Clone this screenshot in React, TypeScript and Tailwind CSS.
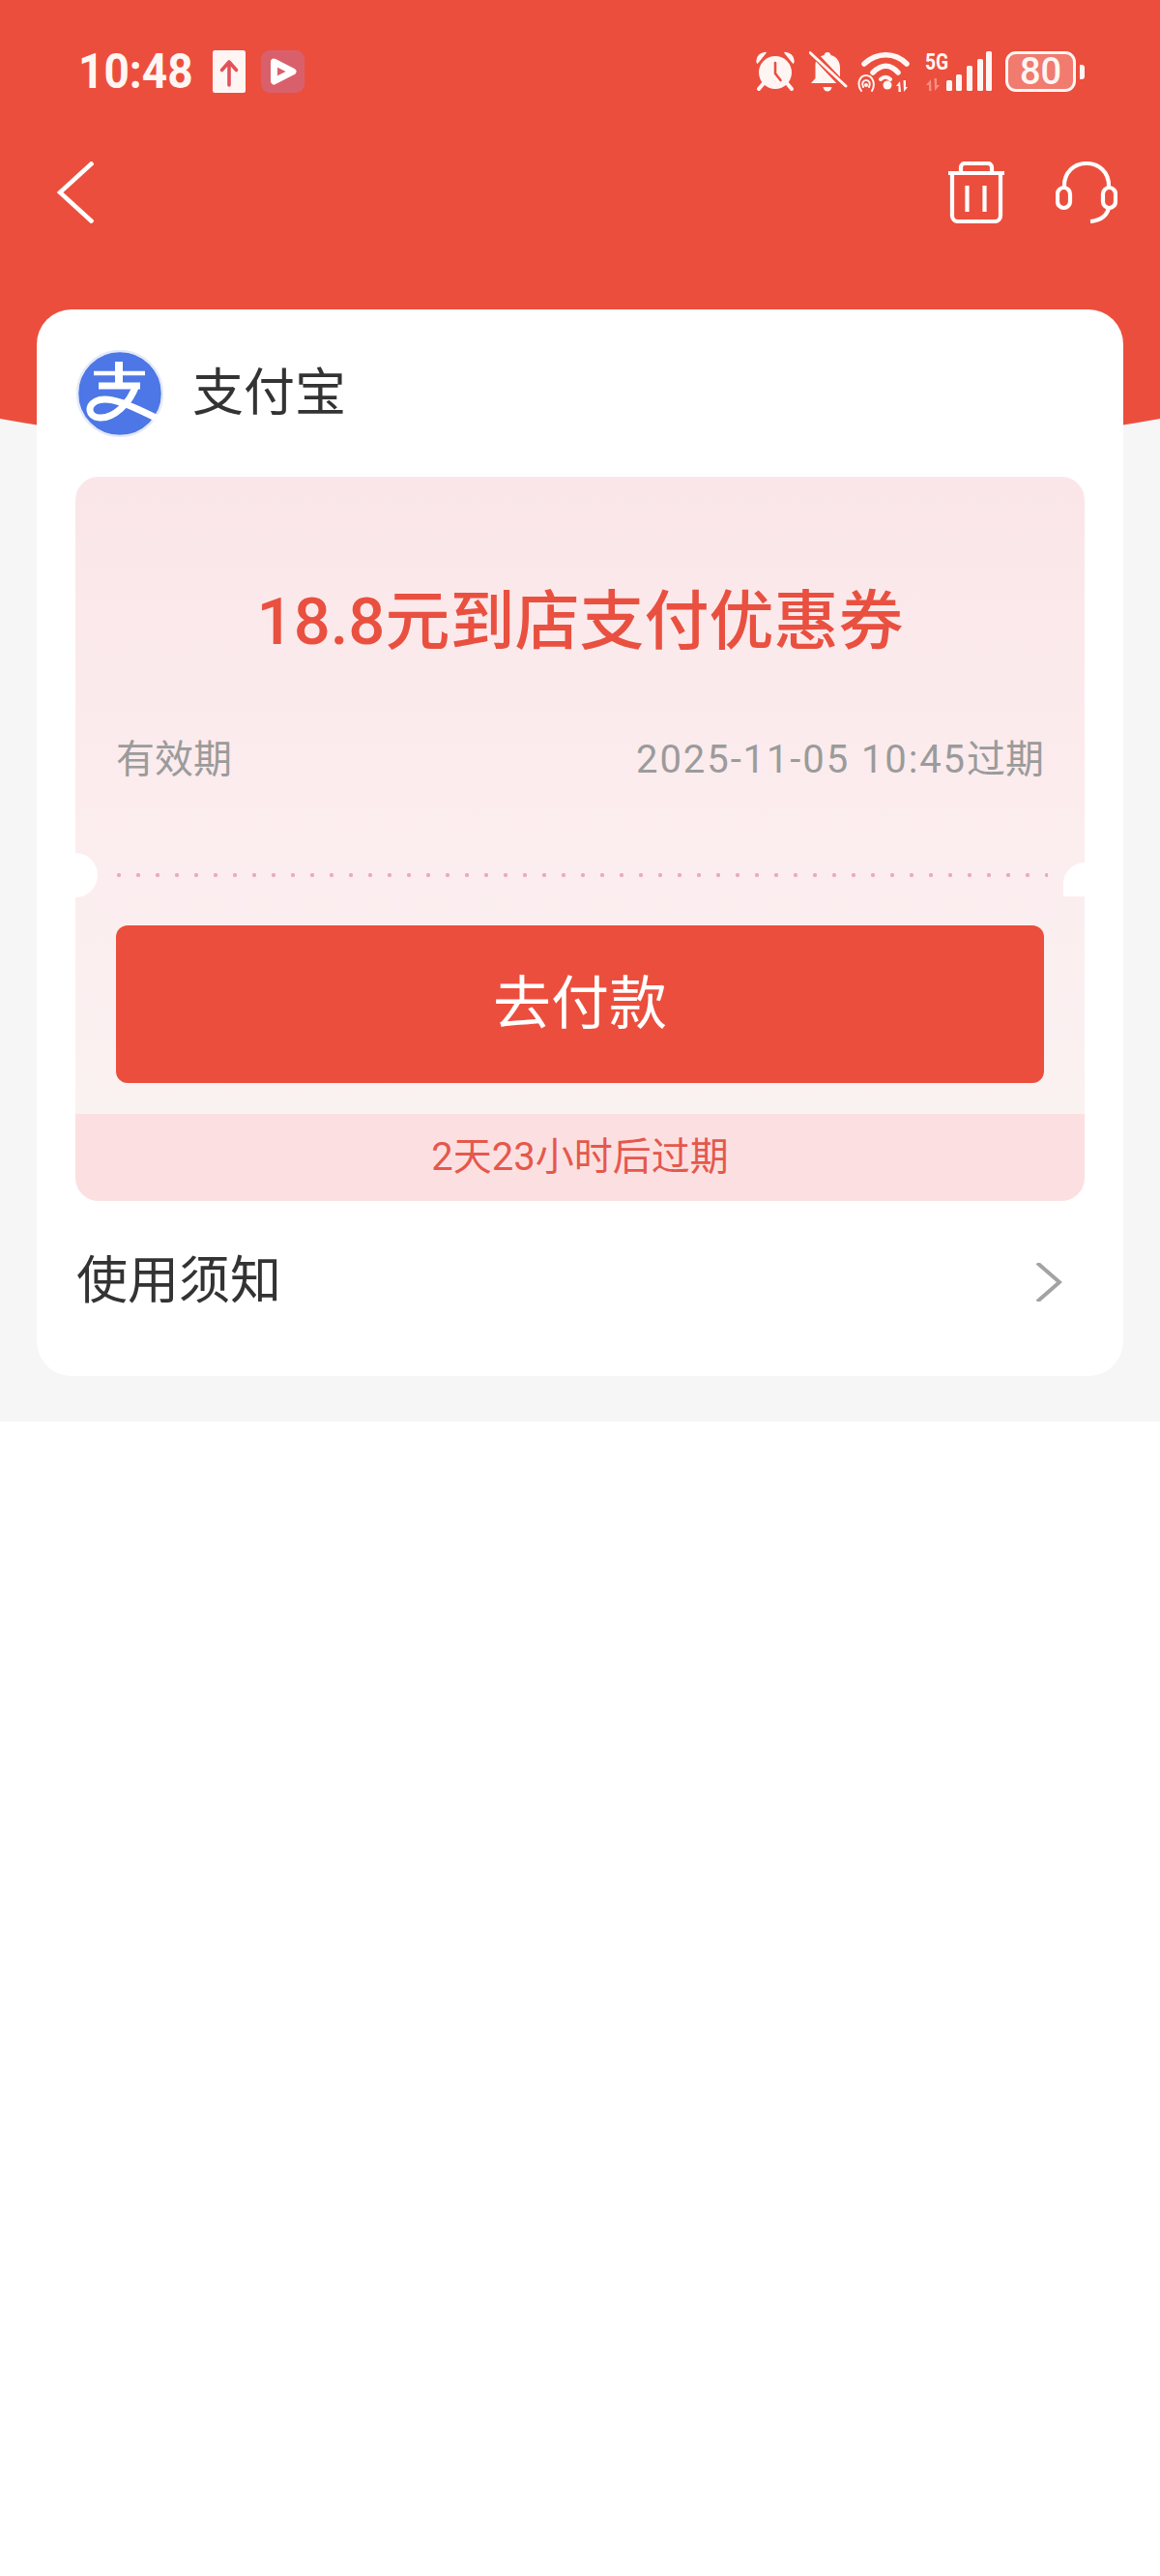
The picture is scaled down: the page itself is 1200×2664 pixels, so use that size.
import React from "react";

const Upload = () => (
  <svg width="34" height="44" viewBox="0 0 34 44">
    <rect x="0" y="0" width="34" height="44" rx="2.5" fill="#fff6f4" />
    <path d="M17 36V13M9.5 20.5 17 12l7.5 8.5" fill="none" stroke="#e2525a" strokeWidth="3.6" strokeLinecap="round" strokeLinejoin="round" />
  </svg>
);

const Play = () => (
  <svg width="45" height="44" viewBox="0 0 45 44">
    <rect x="0" y="0" width="45" height="44" rx="9" fill="#d9606b" />
    <path d="M13.500 12 33 22 13.500 32Z" fill="#d9606b" stroke="#fff" strokeWidth="7" strokeLinejoin="round" />
  </svg>
);

const Alarm = () => (
  <svg width="40" height="42" viewBox="0 0 40 42">
    <circle cx="20" cy="22" r="17" fill="#fff6f4" />
    <path d="M1 10C1.5 5 5 2 10 1.5L1.5 12ZM39 10C38.5 5 35 2 30 1.5L38.5 12Z" fill="#fff6f4" stroke="#fff6f4" strokeWidth="1.5" strokeLinejoin="round" />
    <path d="M8 33 3 39M32 33l5 6" stroke="#fff6f4" strokeWidth="4" strokeLinecap="round" />
    <path d="M20 12v11l5.5 7" fill="none" stroke="#ec4e3d" strokeWidth="2.6" strokeLinecap="round" strokeLinejoin="round" />
  </svg>
);

const BellOff = () => (
  <svg width="40" height="44" viewBox="0 0 40 44">
    <path d="M19 2c2 0 3 1 3.500 3 6 1.500 9.500 6.500 9.500 13v11l5 5H2l4.500-5V14C7 9.500 11 6 15.500 5 16 3 17 2 19 2Z" fill="#fff6f4" />
    <path d="M14.500 38h9c-.5 3-2.500 4.500-4.500 4.500S15 41 14.500 38Z" fill="#fff6f4" />
    <path d="M3 2 36 37" stroke="#ec4e3d" strokeWidth="7" />
    <path d="M1 2.500 38 37" stroke="#fff6f4" strokeWidth="3" strokeLinecap="round" />
  </svg>
);

const Wifi = () => (
  <svg width="58" height="44" viewBox="0 0 58 44">
    <g fill="none" stroke="#fff6f4" strokeLinecap="round">
      <path d="M7 14C20 1.500 39 1.500 51 14" strokeWidth="5.500" />
      <path d="M16 23C25 14 34 14 42 23" strokeWidth="5.500" />
      <path d="M24 30c3-3 7-3 10 0" strokeWidth="4" />
    </g>
    <circle cx="31" cy="36" r="4.500" fill="#fff6f4" />
    <g fill="none" stroke="#fff6f4" strokeWidth="2" strokeLinecap="round">
      <path d="M4 42C-1 35 2 26 9 26s10 9 6 16" />
      <path d="M6 38c-2-4 0-7 3-7s5 3 3 7" />
    </g>
    <circle cx="9" cy="36" r="2" fill="#fff6f4" />
    <path d="M44 32l-4 5h2.500v6h2.500ZM48 43l4-5h-2v-7h-2.500Z" fill="#fff6f4" />
  </svg>
);

const Signal = () => (
  <svg width="50" height="42" viewBox="0 0 50 42">
    <rect x="2" y="30" width="6" height="11" rx="1.500" fill="#fff6f4" />
    <rect x="12" y="24" width="6" height="17" rx="1.500" fill="#fff6f4" />
    <rect x="23" y="15" width="6" height="26" rx="1.500" fill="#fff6f4" />
    <rect x="34" y="8" width="6" height="33" rx="1.500" fill="#fff6f4" />
    <rect x="43" y="0" width="6" height="41" rx="1.500" fill="#fff6f4" />
  </svg>
);

const Trash = () => (
  <svg width="58" height="64" viewBox="0 0 58 64" fill="none" stroke="#fff" strokeWidth="4.200">
    <path d="M0 12h58" />
    <path d="M4 12v44a6 6 0 0 0 6 6h38a6 6 0 0 0 6-6V12" />
    <path d="M13 12V6a4 4 0 0 1 4-4h24a4 4 0 0 1 4 4v6" />
    <path d="M19.500 25v27M37.500 25v27" />
  </svg>
);

const Headset = () => (
  <svg width="64" height="64" viewBox="0 0 64 64" fill="none" stroke="#fff" strokeWidth="4.200">
    <path d="M9 26V25C9 11 19 2 32 2s23 9 23 23v1" />
    <rect x="2" y="27" width="13" height="21" rx="6.500" />
    <rect x="49" y="27" width="13" height="21" rx="6.500" />
    <path d="M55 48c-2 8-9 13-19 14" />
  </svg>
);

const AlipayLogo = () => (
  <svg width="90" height="90" viewBox="0 0 90 90">
    <circle cx="45" cy="45" r="44" fill="#4d76e6" stroke="#e3eaf8" strokeWidth="2.500" />
    <g fill="none" stroke="#fff" strokeLinecap="butt">
      <path d="M44 12v27" strokeWidth="8" />
      <path d="M18 24h53" strokeWidth="4.500" />
      <path d="M23 37h43" strokeWidth="7" />
      <path d="M62 36C55 56 38 71 24 70 12 69 11 58 20 53 33 46 58 58 86 72" strokeWidth="7" />
    </g>
  </svg>
);

export default function App() {
  return (
    <div className="w-[1200px] min-h-[2664px] bg-white overflow-hidden font-['Roboto','Noto_Sans_CJK_SC',sans-serif]">
      <div className="relative h-[1470px] bg-[#f6f6f6] overflow-hidden">
        <div className="absolute left-[-400px] top-0 w-[2000px] h-[481px] bg-[#ec4e3d] rounded-b-[1000px_240px]" />
        <div className="relative">
          <div className="flex items-center h-[96px] pt-[52px]">
            <span className="ml-[81px] w-[128px] text-[50px] leading-[44px] font-bold text-[#fff6f4] scale-x-[0.92] origin-left">10:48</span>
            <div className="ml-[11px]"><Upload /></div>
            <div className="ml-[16px]"><Play /></div>
            <div className="ml-[467px]"><Alarm /></div>
            <div className="ml-[15px]"><BellOff /></div>
            <div className="ml-[10px]"><Wifi /></div>
            <div className="relative ml-[12px] w-[68px] h-[42px]">
              <div className="absolute left-[20px] bottom-0"><Signal /></div>
              <span className="absolute left-0 top-0 text-[24px] leading-[22px] font-bold text-[#fff6f4] scale-x-[0.8] origin-left">5G</span>
              <svg className="absolute left-[0px] bottom-0" width="16" height="14" viewBox="0 0 16 14">
                <path d="M6 1 1 7h3v6h2.500ZM10 13l5-6h-3V0H9.500Z" fill="#f68f83" />
              </svg>
            </div>
            <div className="ml-[15px] relative flex items-center justify-center w-[73px] h-[42px] border-[3px] border-[#fff6f4] rounded-[11px] bg-[#f07b6e]">
              <span className="text-[38px] leading-[38px] font-medium text-[#fff6f4]">80</span>
            </div>
            <div className="ml-[4px] w-[5px] h-[15px] rounded-r-[3px] bg-[#fff6f4]" />
          </div>

          <div className="flex items-center h-[64px] mt-[71px]">
            <svg className="ml-[59px]" width="38" height="64" viewBox="0 0 38 64" fill="none" stroke="#fff" strokeWidth="4.500">
              <path d="M37 1 3 32l34 31" strokeLinejoin="miter" />
            </svg>
            <div className="ml-auto"><Trash /></div>
            <div className="ml-[53px] mr-[44px]"><Headset /></div>
          </div>

          <div className="mt-[89px] mx-[38px] h-[1103px] bg-white rounded-[36px] px-[40px] flex flex-col">
            <div className="h-[173px] flex items-center shrink-0">
              <div className="ml-[1px]"><AlipayLogo /></div>
              <span className="ml-[30px] text-[53px] leading-[60px] text-[#333333]">支付宝</span>
            </div>

            <div className="relative h-[749px] shrink-0 rounded-[24px] overflow-hidden flex flex-col bg-gradient-to-b from-[#fae6e9] via-[#fcedef] to-[#faf3f2]">
              <div className="mt-[100px] h-[100px] flex items-center justify-center text-[67px] leading-[100px] font-medium text-[#e95040]">
                18.8元到店支付优惠券
              </div>
              <div className="mt-[68px] h-[50px] px-[42px] flex items-center justify-between text-[40px] leading-[50px] text-[#9b9b9b]">
                <span>有效期</span>
                <span><span className="tracking-[1.900px]">2025-11-05 10:45</span>过期</span>
              </div>
              <div className="mt-[92px] ml-[42px] mr-[38px] h-[4px] bg-[radial-gradient(circle,#e9aeb9_1.800px,transparent_2.500px)] bg-[length:20px_4px] bg-[position:-7px_0]" />
              <div className="mt-[50px] mx-[42px] h-[163px] rounded-[12px] bg-[#ec4e3d] flex items-center justify-center text-[60px] leading-[70px] text-white">
                去付款
              </div>
              <div className="mt-[32px] h-[90px] bg-[#fce0e1] flex items-center justify-center text-[40px] leading-[50px] text-[#e5584c]">
                2天23小时后过期
              </div>
              <div className="absolute left-[-23px] top-[389px] w-[46px] h-[46px] rounded-full bg-white" />
              <div className="absolute right-0 top-[399px] w-[22px] h-[35px] rounded-tl-[22px] bg-white" />
            </div>

            <div className="flex-1 flex items-start pt-[53px]">
              <span className="ml-[1px] text-[53px] leading-[60px] text-[#333333]">使用须知</span>
              <svg className="ml-auto mr-[23px] mt-[11px]" width="28" height="40" viewBox="0 0 28 40" fill="none" stroke="#a3a3a3" strokeWidth="4">
                <path d="M2 0 25 20 2 40" />
              </svg>
            </div>
          </div>
        </div>
      </div>
    </div>
  );
}
